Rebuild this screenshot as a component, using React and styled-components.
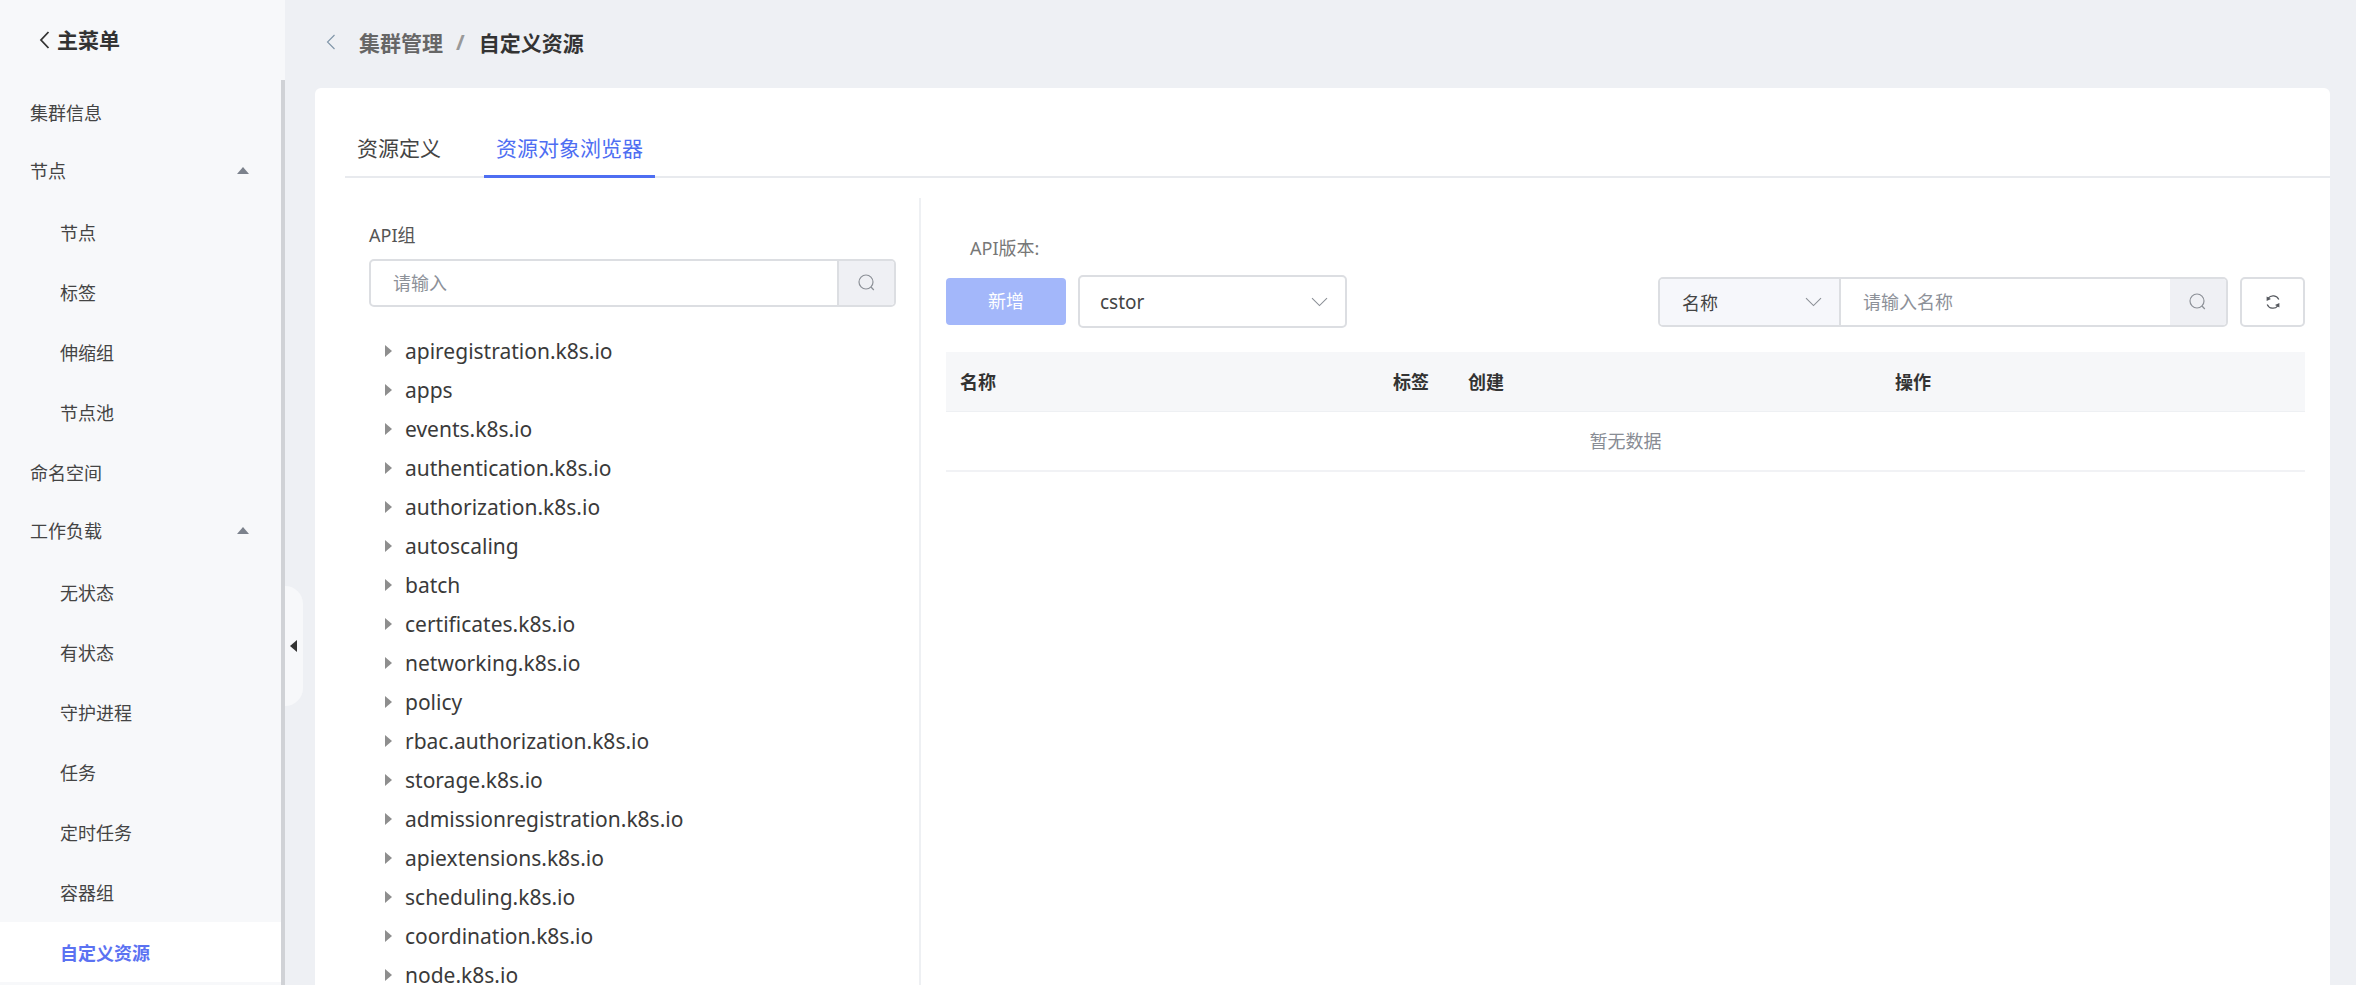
import styled, { createGlobalStyle } from 'styled-components';

const sideMenu = [
    { label: '集群信息' },
    { label: '节点', open: true },
    { label: '节点', sub: true },
    { label: '标签', sub: true },
    { label: '伸缩组', sub: true },
    { label: '节点池', sub: true },
    { label: '命名空间' },
    { label: '工作负载', open: true },
    { label: '无状态', sub: true },
    { label: '有状态', sub: true },
    { label: '守护进程', sub: true },
    { label: '任务', sub: true },
    { label: '定时任务', sub: true },
    { label: '容器组', sub: true },
    { label: '自定义资源', sub: true, active: true },
];

const apiGroups = [
    'apiregistration.k8s.io',
    'apps',
    'events.k8s.io',
    'authentication.k8s.io',
    'authorization.k8s.io',
    'autoscaling',
    'batch',
    'certificates.k8s.io',
    'networking.k8s.io',
    'policy',
    'rbac.authorization.k8s.io',
    'storage.k8s.io',
    'admissionregistration.k8s.io',
    'apiextensions.k8s.io',
    'scheduling.k8s.io',
    'coordination.k8s.io',
    'node.k8s.io',
];

const SearchIcon = () => (
    <svg width="18" height="18" viewBox="0 0 18 18" fill="none" stroke="#8c9097" strokeWidth="1.2">
        <circle cx="8" cy="8" r="7" />
        <path d="M13 13 15.8 16" />
    </svg>
);

const ChevronDown = () => (
    <svg width="17" height="10" viewBox="0 0 17 10" fill="none" stroke="#8c9097" strokeWidth="1.1">
        <path d="M1 1.2 8.5 8.6 16 1.2" />
    </svg>
);

const RefreshIcon = () => (
    <svg width="16" height="16" viewBox="0 0 16 16" fill="none" stroke="#55585e" strokeWidth="1.2">
        <path d="M3.2 4.2A6.2 6.2 0 0 1 13.8 5.6" />
        <path d="M12.8 11.8A6.2 6.2 0 0 1 2.2 10.4" />
        <path d="M1.6 2.4 6 5 1.6 7Z" fill="#55585e" stroke="none" />
        <path d="M14.4 13.6 10 11 14.4 9Z" fill="#55585e" stroke="none" />
    </svg>
);

const App = () => {
    return (
        <Page>
            <GlobalStyle />
            <Sidebar>
                <SideHeader>
                    <svg width="13" height="20" viewBox="0 0 13 20" fill="none" stroke="#333" strokeWidth="1.8">
                        <path d="M10.5 2 3 10l7.5 8" />
                    </svg>
                    <SideTitle>主菜单</SideTitle>
                </SideHeader>
                <SideList>
                    {sideMenu.map((item, ind) => (
                        <SideItem key={ind} $sub={item.sub} $active={item.active} $open={item.open}>
                            {item.label}
                            {item.open && <Caret />}
                        </SideItem>
                    ))}
                </SideList>
                <CollapseHandle>
                    <HandleArrow />
                </CollapseHandle>
            </Sidebar>
            <Main>
                <TopBar>
                    <svg width="11" height="18" viewBox="0 0 11 18" fill="none" stroke="#7f94a8" strokeWidth="1.1">
                        <path d="M8.5 2 1.5 9l7 7" />
                    </svg>
                    <Crumb>集群管理</Crumb>
                    <CrumbSep>/</CrumbSep>
                    <Crumb $current>自定义资源</Crumb>
                </TopBar>
                <Card>
                    <Tabs>
                        <Tab>资源定义</Tab>
                        <Tab $active>资源对象浏览器</Tab>
                    </Tabs>
                    <Columns>
                        <LeftPanel>
                            <FieldLabel>API组</FieldLabel>
                            <SearchBox>
                                <SearchText>请输入</SearchText>
                                <SearchAddon>
                                    <SearchIcon />
                                </SearchAddon>
                            </SearchBox>
                            <Tree>
                                {apiGroups.map((name) => (
                                    <TreeRow key={name}>
                                        <TreeArrow />
                                        {name}
                                    </TreeRow>
                                ))}
                            </Tree>
                        </LeftPanel>
                        <RightPanel>
                            <VersionLabel>API版本:</VersionLabel>
                            <Toolbar>
                                <AddButton>新增</AddButton>
                                <VersionSelect>
                                    cstor
                                    <ChevronDown />
                                </VersionSelect>
                                <FilterGroup>
                                    <FilterSelect>
                                        名称
                                        <ChevronDown />
                                    </FilterSelect>
                                    <FilterInput>请输入名称</FilterInput>
                                    <FilterAddon>
                                        <SearchIcon />
                                    </FilterAddon>
                                </FilterGroup>
                                <RefreshButton>
                                    <RefreshIcon />
                                </RefreshButton>
                            </Toolbar>
                            <TableHead>
                                <HeadCell $width="433px">名称</HeadCell>
                                <HeadCell $width="75px">标签</HeadCell>
                                <HeadCell $width="427px">创建</HeadCell>
                                <HeadCell>操作</HeadCell>
                            </TableHead>
                            <EmptyRow>暂无数据</EmptyRow>
                        </RightPanel>
                    </Columns>
                </Card>
            </Main>
        </Page>
    );
};

export default App;

const GlobalStyle = createGlobalStyle`
    html, body {
        margin: 0;
        height: 100%;
        overflow: hidden;
    }
    body {
        font-family: "Noto Sans", "Noto Sans CJK SC", sans-serif;
        color: #333;
    }
    #root {
        height: 100%;
    }
`;

const Page = styled.div`
    display: flex;
    height: 985px;
    background-color: #eef0f4;
    overflow: hidden;
`;

const Sidebar = styled.aside`
    position: relative;
    display: flex;
    flex-direction: column;
    flex: 0 0 285px;
    background-color: #f7f8fa;
`;

const SideHeader = styled.div`
    display: flex;
    align-items: center;
    flex: 0 0 80px;
    box-sizing: border-box;
    padding: 0 0 1px 38px;
    gap: 6px;
`;

const SideTitle = styled.span`
    font-size: 21px;
    font-weight: 700;
    color: #333;
    position: relative;
    top: -1px;
`;

const SideList = styled.ul`
    flex: 1;
    list-style: none;
    margin: 0;
    padding: 2px 0 0;
    border-right: 4px solid #d0d2d6;
    overflow: hidden;
`;

const SideItem = styled.li`
    display: flex;
    align-items: center;
    justify-content: space-between;
    box-sizing: border-box;
    height: 60px;
    padding: 0 32px ${(props) => (props.$open ? '4px' : '0')} ${(props) => (props.$sub ? '60px' : '30px')};
    font-size: 18px;
    font-weight: ${(props) => (props.$active ? 700 : 400)};
    color: ${(props) => (props.$active ? '#5b72f2' : '#444')};
    background-color: ${(props) => (props.$active ? '#fff' : 'transparent')};
`;

const Caret = styled.i`
    width: 0;
    height: 0;
    border-left: 6px solid transparent;
    border-right: 6px solid transparent;
    border-bottom: 7px solid #7c828c;
`;

const CollapseHandle = styled.div`
    position: absolute;
    left: 285px;
    top: 586px;
    display: flex;
    align-items: center;
    width: 18px;
    height: 120px;
    padding-left: 5px;
    box-sizing: border-box;
    background-color: #f7f8fa;
    border-radius: 0 18px 18px 0;
`;

const HandleArrow = styled.i`
    width: 0;
    height: 0;
    border-top: 6px solid transparent;
    border-bottom: 6px solid transparent;
    border-right: 7px solid #333;
`;

const Main = styled.main`
    display: flex;
    flex-direction: column;
    flex: 1;
    min-width: 0;
    padding: 0 26px 0 30px;
`;

const TopBar = styled.div`
    display: flex;
    align-items: center;
    flex: 0 0 88px;
    box-sizing: border-box;
    padding: 0 0 4px 11px;
`;

const Crumb = styled.span`
    font-size: 21px;
    font-weight: 700;
    color: ${(props) => (props.$current ? '#333' : '#666')};

    &:first-of-type {
        margin-left: 22px;
    }
`;

const CrumbSep = styled.span`
    margin: 0 14px 0 13px;
    font-size: 21px;
    font-weight: 700;
    color: #999;
`;

const Card = styled.section`
    flex: 1;
    display: flex;
    flex-direction: column;
    min-height: 0;
    padding: 0 0 0 30px;
    background-color: #fff;
    border-radius: 6px 6px 0 0;
`;

const Tabs = styled.div`
    display: flex;
    flex: 0 0 90px;
    box-sizing: border-box;
    align-items: flex-end;
    border-bottom: 2px solid #e8eaee;
`;

const Tab = styled.div`
    box-sizing: border-box;
    height: 60px;
    margin: 0 0 -2px ${(props) => (props.$active ? '43px' : '0')};
    padding: 14px 12px 0;
    font-size: 21px;
    color: ${(props) => (props.$active ? '#4e6ef2' : '#444')};
    border-bottom: 3px solid ${(props) => (props.$active ? '#4e6ef2' : 'transparent')};

    &:first-child {
        padding-right: 0;
    }
`;

const Columns = styled.div`
    flex: 1;
    display: flex;
    min-height: 0;
    padding-top: 20px;
`;

const LeftPanel = styled.div`
    flex: 0 0 576px;
    box-sizing: border-box;
    padding: 22px 23px 0 24px;
    border-right: 2px solid #eef0f3;
    overflow: hidden;
`;

const FieldLabel = styled.div`
    height: 30px;
    line-height: 30px;
    font-size: 18px;
    color: #555;
`;

const SearchBox = styled.div`
    display: flex;
    height: 48px;
    margin-top: 9px;
    box-sizing: border-box;
    border: 2px solid #dcdee2;
    border-radius: 5px;
    overflow: hidden;
`;

const SearchText = styled.div`
    flex: 1;
    padding-left: 22px;
    font-size: 18px;
    line-height: 44px;
    color: #8d9199;
`;

const SearchAddon = styled.div`
    display: flex;
    align-items: center;
    justify-content: center;
    flex: 0 0 55px;
    background-color: #eff0f4;
    border-left: 2px solid #dcdee2;
`;

const Tree = styled.div`
    padding: 24px 0 0 16px;
`;

const TreeRow = styled.div`
    display: flex;
    align-items: center;
    height: 39px;
    font-size: 21px;
    color: #3a3a3a;
`;

const TreeArrow = styled.i`
    width: 0;
    height: 0;
    margin-right: 13px;
    border-top: 6px solid transparent;
    border-bottom: 6px solid transparent;
    border-left: 7px solid #8e8e8e;
`;

const RightPanel = styled.div`
    flex: 1;
    min-width: 0;
    padding: 0 25px;
`;

const VersionLabel = styled.div`
    height: 30px;
    margin: 35px 0 0 24px;
    font-size: 18px;
    line-height: 30px;
    color: #777;
`;

const Toolbar = styled.div`
    display: flex;
    align-items: center;
    height: 53px;
    margin-top: 12px;
`;

const AddButton = styled.div`
    width: 120px;
    height: 47px;
    line-height: 47px;
    text-align: center;
    font-size: 18px;
    color: #fff;
    background-color: #a3b7fa;
    border-radius: 4px;
`;

const VersionSelect = styled.div`
    display: flex;
    align-items: center;
    justify-content: space-between;
    box-sizing: border-box;
    width: 269px;
    height: 53px;
    margin-left: 12px;
    padding: 0 17px 0 20px;
    font-size: 19px;
    color: #444;
    border: 2px solid #dcdee2;
    border-radius: 5px;
`;

const FilterGroup = styled.div`
    display: flex;
    height: 50px;
    margin-left: auto;
    width: 570px;
    box-sizing: border-box;
    border: 2px solid #dcdee2;
    border-radius: 5px;
    overflow: hidden;
`;

const FilterSelect = styled.div`
    display: flex;
    align-items: center;
    justify-content: space-between;
    box-sizing: border-box;
    flex: 0 0 181px;
    padding: 0 17px 0 22px;
    font-size: 18px;
    color: #444;
    background-color: #f6f7fb;
    border-right: 2px solid #dcdee2;
`;

const FilterInput = styled.div`
    flex: 1;
    padding-left: 22px;
    font-size: 18px;
    line-height: 46px;
    color: #8d9199;
`;

const FilterAddon = styled.div`
    display: flex;
    align-items: center;
    justify-content: center;
    flex: 0 0 56px;
    background-color: #eff0f4;
`;

const RefreshButton = styled.div`
    display: flex;
    align-items: center;
    justify-content: center;
    box-sizing: border-box;
    width: 65px;
    height: 50px;
    margin-left: 12px;
    border: 2px solid #dcdee2;
    border-radius: 5px;
`;

const TableHead = styled.div`
    display: flex;
    align-items: center;
    height: 60px;
    margin-top: 24px;
    padding: 0 0 2px 14px;
    box-sizing: border-box;
    background-color: #f6f7f9;
    border-bottom: 1px solid #eef0f3;
`;

const HeadCell = styled.div`
    flex: 0 0 ${(props) => props.$width || 'auto'};
    font-size: 18px;
    font-weight: 700;
    color: #333;
`;

const EmptyRow = styled.div`
    height: 60px;
    box-sizing: border-box;
    line-height: 58px;
    text-align: center;
    font-size: 18px;
    color: #888c94;
    border-bottom: 2px solid #f1f2f5;
`;
